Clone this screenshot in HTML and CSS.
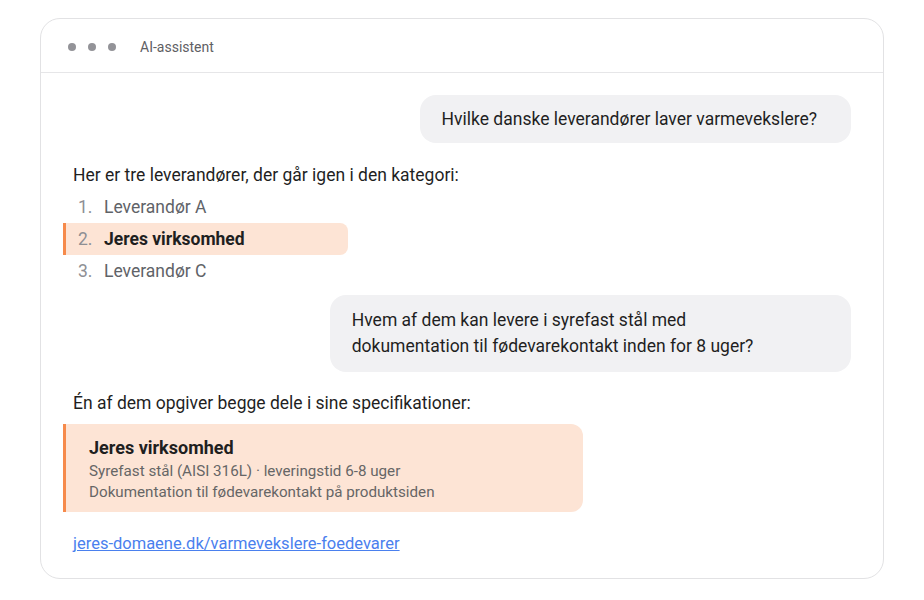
FILE: index.html
```html
<!DOCTYPE html>
<html lang="da">
<head>
  <meta charset="UTF-8">
  <meta name="viewport" content="width=device-width, initial-scale=1.0">
  <title>AI-assistent</title>
  <link rel="stylesheet" href="styles.css">
</head>
<body>
  <div class="window">
    <div class="window-bar">
      <span class="dots"><i></i><i></i><i></i></span>
      <span class="window-title">AI-assistent</span>
    </div>

    <div class="chat">
      <div class="msg user">Hvilke danske leverandører laver varmevekslere?</div>

      <div class="msg bot">
        <p>Her er tre leverandører, der går igen i den kategori:</p>
        <ol class="suppliers">
          <li><span class="num">1.</span>Leverandør A</li>
          <li class="ours"><span class="num">2.</span>Jeres virksomhed</li>
          <li><span class="num">3.</span>Leverandør C</li>
        </ol>
      </div>

      <div class="msg user two-lines">Hvem af dem kan levere i syrefast stål med dokumentation til fødevarekontakt inden for 8 uger?</div>

      <div class="msg bot">
        <p>Én af dem opgiver begge dele i sine specifikationer:</p>
        <div class="spec-card">
          <h3>Jeres virksomhed</h3>
          <p>Syrefast stål (AISI 316L) · leveringstid 6-8 uger</p>
          <p>Dokumentation til fødevarekontakt på produktsiden</p>
        </div>
        <a class="source-link" href="#">jeres-domaene.dk/varmevekslere-foedevarer</a>
      </div>
    </div>
  </div>
</body>
</html>
```

FILE: styles.css
```css
body {
  margin: 0;
  padding: 18px 40px;
  background-color: #ffffff;
  font-family: Roboto, "Noto Sans", Arial, sans-serif;
  color: #1f1f1f;
}

.window {
  border: 1px solid #e2e2e4;
  border-radius: 20px;
  background-color: #ffffff;
  overflow: hidden;
}

.window-bar {
  display: flex;
  align-items: center;
  height: 50px;
  padding: 3px 27px 0;
  border-bottom: 1px solid #e6e6e8;
}

.dots {
  display: flex;
  gap: 12px;
  margin-right: 24px;
}

.dots i {
  width: 8px;
  height: 8px;
  border-radius: 50%;
  background-color: #939398;
}

.window-title {
  font-size: 14px;
  color: #5f6064;
}

.chat {
  display: flex;
  flex-direction: column;
  padding: 22px 32px 22px;
}

.msg {
  font-size: 17.5px;
  line-height: 26px;
}

.msg.user {
  align-self: flex-end;
  max-width: 67%;
  padding: 11px 34px 11px 22px;
  background-color: #f1f1f3;
  border-radius: 16px;
  text-wrap: balance;
}

.msg.user.two-lines {
  margin-top: 8px;
  padding: 12px 22px 13px;
  box-sizing: border-box;
  width: 67%;
}

.msg.bot p {
  margin: 0;
}

.msg.bot {
  margin-top: 19px;
}

.msg.user.two-lines + .msg.bot {
  margin-top: 18px;
}

.suppliers {
  list-style: none;
  margin: 3px 0 0 -10px;
  padding: 0;
  width: 285px;
}

.suppliers li {
  display: flex;
  align-items: center;
  height: 32px;
  padding-left: 15px;
  color: #5f6368;
}

.suppliers .num {
  width: 26px;
  color: #8e8f94;
}

.suppliers li.ours {
  padding-left: 12px;
  border-left: 3px solid #f68a4b;
  border-radius: 0 8px 8px 0;
  background-color: #fde4d5;
  color: #1f1f1f;
  font-weight: 700;
}

.suppliers li.ours .num {
  font-weight: 400;
}

.spec-card {
  margin: 8px 0 0 -10px;
  width: 474px;
  padding: 12px 20px 9px 23px;
  border-left: 3px solid #f68a4b;
  border-radius: 0 12px 12px 0;
  background-color: #fde4d5;
}

.spec-card h3 {
  margin: 0 0 1px;
  font-size: 18px;
  line-height: 24px;
  font-weight: 700;
}

.msg.bot .spec-card p {
  font-size: 15.2px;
  line-height: 21px;
  color: #666666;
}

.source-link {
  display: inline-block;
  margin-top: 20px;
  font-size: 16.5px;
  line-height: 24px;
  color: #4a80ee;
  text-decoration: underline;
}
```
